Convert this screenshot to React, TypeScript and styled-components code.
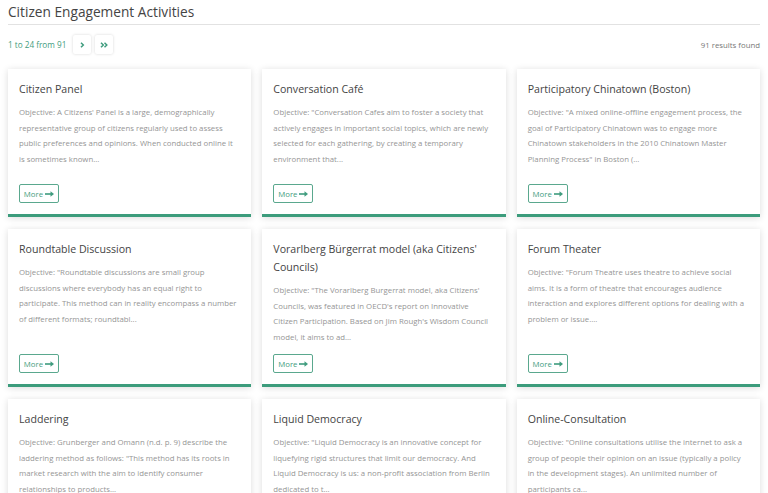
import React from "react";
import styled, { createGlobalStyle } from "styled-components";

const Global = createGlobalStyle`
  html, body { margin: 0; padding: 0; background: #fff; }
  body { font-family: "Open Sans", "Noto Sans", sans-serif; }
  * { box-sizing: border-box; }
`;

const Page = styled.div`
  padding: 0 8px 0 8px;
  width: 768px;
`;

const Heading = styled.h1`
  margin: 0;
  padding-top: 2px;
  font-size: 13.7px;
  font-weight: 400;
  color: #444;
  line-height: 20px;
  padding-bottom: 2px;
  border-bottom: 1px solid #e2e2e2;
`;

const Toolbar = styled.div`
  display: flex;
  align-items: center;
  justify-content: space-between;
  height: 37px;
  margin-top: 1px;
`;

const Pager = styled.div`
  display: flex;
  align-items: center;
  gap: 4px;
`;

const PagerText = styled.span`
  font-size: 8.2px;
  color: #3f9c7e;
  margin-right: 3px;
`;

const PagerButton = styled.button`
  width: 18px;
  height: 19px;
  border: none;
  background: #fff;
  box-shadow: 0 0 3px rgba(0, 0, 0, 0.16);
  border-radius: 2px;
  display: flex;
  align-items: center;
  justify-content: center;
  padding: 0;
  color: #3f9c7e;
`;

const Results = styled.span`
  font-size: 7.8px;
  color: #777;
`;

const Grid = styled.div`
  display: grid;
  grid-template-columns: repeat(3, 1fr);
  column-gap: 11px;
  row-gap: 12px;
  margin-top: 6px;
`;

const Card = styled.div`
  background: #fff;
  box-shadow: 0 1px 7px rgba(0, 0, 0, 0.14);
  border-bottom: 3px solid #3c9c7c;
  padding: 11px 11px 11px 11px;
  display: flex;
  flex-direction: column;
`;

const CardBody = styled.div`
  min-height: 95px;
  margin-bottom: 9px;
`;

const CardTitle = styled.h2`
  margin: 0;
  font-size: 10.6px;
  font-weight: 400;
  color: #444;
  line-height: 18px;
  margin-bottom: 7px;
`;

const CardText = styled.p`
  margin: 0;
  font-size: 7.8px;
  line-height: 15.5px;
  color: #959595;
`;

const MoreButton = styled.button`
  margin-top: auto;
  align-self: flex-start;
  height: 19px;
  width: 40px;
  padding: 0;
  border: 1px solid #5aa88e;
  border-radius: 2px;
  background: #fff;
  color: #3f9c7e;
  font-family: inherit;
  font-size: 7.8px;
  display: flex;
  align-items: center;
  justify-content: center;
  gap: 2px;
`;

const Chevron = ({ double }: { double?: boolean }) => (
  <svg width={double ? 8 : 5} height="6" viewBox={double ? "0 0 8 6" : "0 0 5 6"} fill="none" stroke="currentColor" strokeWidth="1.5">
    <path d="M1 0.8 L3.3 3 L1 5.2" />
    {double && <path d="M4.5 0.8 L6.8 3 L4.5 5.2" />}
  </svg>
);

const Arrow = () => (
  <svg width="9" height="6" viewBox="0 0 9 6" fill="currentColor">
    <rect x="0" y="2.2" width="6" height="1.6" />
    <path d="M5.5 0.3 L9 3 L5.5 5.7 Z" />
  </svg>
);

const items = [
  {
    t: "Citizen Panel",
    d: "Objective: A Citizens' Panel is a large, demographically representative group of citizens regularly used to assess public preferences and opinions. When conducted online it is sometimes known...",
  },
  {
    t: "Conversation Café",
    d: "Objective: \"Conversation Cafes aim to foster a society that actively engages in important social topics, which are newly selected for each gathering, by creating a temporary environment that...",
  },
  {
    t: "Participatory Chinatown (Boston)",
    d: "Objective: \"A mixed online-offline engagement process, the goal of Participatory Chinatown was to engage more Chinatown stakeholders in the 2010 Chinatown Master Planning Process\" in Boston (...",
  },
  {
    t: "Roundtable Discussion",
    d: "Objective: \"Roundtable discussions are small group discussions where everybody has an equal right to participate. This method can in reality encompass a number of different formats; roundtabl...",
  },
  {
    t: "Vorarlberg Bürgerrat model (aka Citizens' Councils)",
    d: "Objective: \"The Vorarlberg Burgerrat model, aka Citizens' Councils, was featured in OECD's report on Innovative Citizen Participation. Based on Jim Rough's Wisdom Council model, it aims to ad...",
  },
  {
    t: "Forum Theater",
    d: "Objective: \"Forum Theatre uses theatre to achieve social aims. It is a form of theatre that encourages audience interaction and explores different options for dealing with a problem or issue....",
  },
  {
    t: "Laddering",
    d: "Objective: Grunberger and Omann (n.d. p. 9) describe the laddering method as follows: \"This method has its roots in market research with the aim to identify consumer relationships to products...",
  },
  {
    t: "Liquid Democracy",
    d: "Objective: \"Liquid Democracy is an innovative concept for liquefying rigid structures that limit our democracy. And Liquid Democracy is us: a non-profit association from Berlin dedicated to t...",
  },
  {
    t: "Online-Consultation",
    d: "Objective: \"Online consultations utilise the internet to ask a group of people their opinion on an issue (typically a policy in the development stages). An unlimited number of participants ca...",
  },
];

export default function App() {
  return (
    <Page>
      <Global />
      <Heading>Citizen Engagement Activities</Heading>
      <Toolbar>
        <Pager>
          <PagerText>1 to 24 from 91</PagerText>
          <PagerButton aria-label="next">
            <Chevron />
          </PagerButton>
          <PagerButton aria-label="last">
            <Chevron double />
          </PagerButton>
        </Pager>
        <Results>91 results found</Results>
      </Toolbar>
      <Grid>
        {items.map((it) => (
          <Card key={it.t}>
            <CardBody>
              <CardTitle>{it.t}</CardTitle>
              <CardText>{it.d}</CardText>
            </CardBody>
            <MoreButton>
              More <Arrow />
            </MoreButton>
          </Card>
        ))}
      </Grid>
    </Page>
  );
}
